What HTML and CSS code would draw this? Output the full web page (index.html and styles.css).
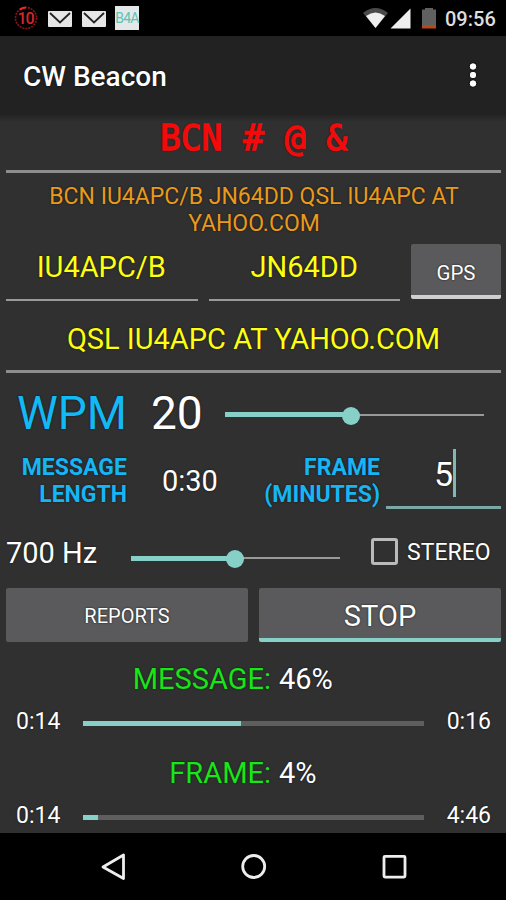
FILE: index.html
```html
<!DOCTYPE html>
<html lang="en">
<head>
<meta charset="utf-8">
<title>CW Beacon</title>
<link rel="stylesheet" href="styles.css">
</head>
<body>
<div class="phone">
  <header class="status">
    <svg class="status-icons" width="150" height="36" viewBox="0 0 150 36">
      <circle cx="26" cy="18" r="10.500" fill="none" stroke="#8c1418" stroke-width="1.600" stroke-dasharray="2 1"/>
      <path d="M20 9.500A10.500 10.500 0 0 1 26 7.500" fill="none" stroke="#e8282c" stroke-width="2.200"/>
      <text x="25.500" y="23.500" class="ten">10</text>
      <g id="mail">
        <rect x="48" y="11" width="24" height="16" rx="1" fill="#e6e6e6"/>
        <path d="M50 13L60 22.500L70 13" fill="none" stroke="#222" stroke-width="1.800"/>
      </g>
      <use href="#mail" x="34"/>
      <rect x="115" y="6" width="24" height="24" fill="#e4e8e8"/>
      <text x="127" y="23" class="b4a">B4A</text>
    </svg>
    <svg class="status-icons" width="76" height="36" viewBox="0 0 76 36">
      <path d="M0 13Q12.500 3 25 13L12.500 28Z" fill="#4a4a4a"/>
      <path d="M3 16Q12.500 9 22 16L12.500 28Z" fill="#efefef"/>
      <path d="M47.500 8.500V28.500H27.500Z" fill="#efefef"/>
      <path d="M59 9.500H62V8H70V9.500H73V25H59Z" fill="#606060"/>
      <rect x="59" y="25" width="14" height="3.500" fill="#b8471c"/>
    </svg>
    <span class="clock">09:56</span>
  </header>

  <div class="appbar">
    <h1 class="title">CW Beacon</h1>
    <svg width="12" height="30" viewBox="0 0 12 30">
      <g fill="#fff" stroke="#000" stroke-width="1"><circle cx="6" cy="6.500" r="3.800"/><circle cx="6" cy="15" r="3.800"/><circle cx="6" cy="23.500" r="3.800"/></g>
    </svg>
  </div>

  <main class="content">
    <div class="pattern"><span>BCN # @ &amp;</span></div>
    <p class="preview">BCN IU4APC/B JN64DD QSL IU4APC AT<br>YAHOO.COM</p>
    <div class="station">
      <div class="field call">IU4APC/B</div>
      <div class="field loc">JN64DD</div>
      <button class="btn gps">GPS</button>
    </div>
    <div class="message">QSL IU4APC AT YAHOO.COM</div>

    <div class="speed">
      <span class="wpm">WPM</span>
      <span class="wpm-value">20</span>
      <div class="slider wpm-slider"><i class="on"></i><i class="thumb"></i><i class="off"></i></div>
    </div>

    <div class="timing">
      <span class="label msg-label">MESSAGE<br>LENGTH</span>
      <span class="length">0:30</span>
      <span class="label frame-label">FRAME<br>(MINUTES)</span>
      <div class="minutes"><span class="digit">5</span><i class="caret"></i></div>
    </div>

    <div class="tone">
      <span class="hertz">700 Hz</span>
      <div class="slider tone-slider"><i class="on"></i><i class="thumb"></i><i class="off"></i></div>
      <i class="check"></i>
      <span class="stereo">STEREO</span>
    </div>

    <div class="actions">
      <button class="btn reports">REPORTS</button>
      <button class="btn stop">STOP</button>
    </div>

    <div class="heading h-message"><span class="green">MESSAGE:</span><span class="pct">46%</span></div>
    <div class="progress">
      <span class="time">0:14</span>
      <div class="track"><div class="fill" style="width:46.2%"></div></div>
      <span class="time">0:16</span>
    </div>
    <div class="heading h-frame"><span class="green">FRAME:</span><span class="pct">4%</span></div>
    <div class="progress">
      <span class="time">0:14</span>
      <div class="track"><div class="fill" style="width:4.4%"></div></div>
      <span class="time">4:46</span>
    </div>
  </main>

  <nav class="nav">
    <svg width="506" height="67" viewBox="0 0 506 67">
      <g fill="none" stroke="#eee" stroke-width="2.800" stroke-linejoin="round">
        <path d="M103 34L123.500 22V45.500Z"/>
        <circle cx="253.700" cy="33.500" r="11"/>
        <rect x="384" y="23.300" width="21" height="20.800" rx="1"/>
      </g>
    </svg>
  </nav>
</div>
</body>
</html>
```
FILE: styles.css
```css
* { box-sizing: border-box; margin: 0; padding: 0; }
body { background: #000; font-family: Roboto, sans-serif; color: #fff; }
.phone { width: 506px; height: 900px; display: flex; flex-direction: column; overflow: hidden; white-space: nowrap; }
svg { display: block; flex: none; }
i { display: block; flex: none; }

.status { height: 36px; display: flex; background: #000; }
.status-icons:nth-child(2) { margin-left: 213px; }
.ten { font: 500 16px Roboto, sans-serif; fill: #d8262a; text-anchor: middle; letter-spacing: -1px; }
.b4a { font: 14px Roboto, sans-serif; fill: #5cc4b4; text-anchor: middle; letter-spacing: -.8px; }
.clock { margin-left: 6px; line-height: 38px; font-size: 20px; font-weight: 500; color: #dedede; }

.appbar { height: 78px; display: flex; align-items: center; justify-content: space-between; padding: 0 27px 0 23px; background: #222; }
.title { font-size: 28px; font-weight: 500; line-height: 74px; padding-top: 4px; text-shadow: 0 0 2px #000; }

.content { height: 719px; background: linear-gradient(#222, #303030 8px); text-shadow: 0 0 2px #111; }
.pattern { height: 59px; margin: 0 5px 0 6px; border-bottom: 3px solid #8d8d8d; text-align: center; line-height: 48px; font-family: "DejaVu Sans Mono", monospace; font-size: 34.5px; color: #f30b0b; -webkit-text-stroke: 1.3px #f30b0b; }
.pattern span { display: inline-block; transform: scaleY(1.04); }
.preview { height: 71px; padding-top: 10px; text-align: center; line-height: 27px; font-size: 23px; color: #e99a1c; padding-left: 2px; }
.station { height: 57px; display: flex; gap: 11px; padding-left: 6px; }
.field { width: 191.5px; border-bottom: 2px solid #999; text-align: center; line-height: 47px; font-size: 29px; color: #ff1; }
.call { padding-right: 1px; }
.btn { border: 0; border-radius: 2px; background: #5a5a5c; font-family: inherit; color: #fff; text-align: center; text-shadow: inherit; }
.gps { width: 90px; height: 55px; border-bottom: 4px solid #d0d0d0; font-size: 20.5px; padding-top: 6px; }
.message { height: 72px; margin: 0 5px 0 6px; border-bottom: 3px solid #8d8d8d; text-align: center; line-height: 77px; font-size: 29px; color: #ff1; }

.speed { height: 76px; display: flex; line-height: 80px; font-size: 46px; }
.wpm { width: 133px; padding-left: 17px; color: #13b9f5; }
.wpm-value { width: 92px; padding-left: 18px; }
.slider { display: flex; align-items: center; }
.slider .on { height: 5px; background: #86d0c8; }
.slider .off { flex: 1; height: 2px; background: #999; }
.slider .thumb { width: 18px; height: 18px; margin: 2px -1px 0; border-radius: 50%; background: #86d0c8; z-index: 1; }
.wpm-slider { width: 259px; height: 83px; }
.wpm-slider .on { width: 118px; }

.timing { height: 60px; display: flex; }
.label { padding-top: 5px; text-align: right; line-height: 27px; font-size: 23px; font-weight: 700; color: #17b5f3; }
.msg-label { width: 127px; }
.length { width: 109px; padding-left: 35px; line-height: 65px; font-size: 29px; }
.frame-label { width: 144px; }
.minutes { width: 115px; height: 60px; margin-left: 6px; display: flex; border-bottom: 3px solid #7ba8a5; }
.digit { width: 67px; text-align: right; line-height: 51px; font-size: 34px; }
.caret { width: 3px; height: 48px; background: #7eb9b4; }

.tone { height: 78px; display: flex; align-items: center; padding-bottom: 1px; }
.hertz { width: 131px; padding-left: 6px; line-height: 60px; margin-top: 10px; font-size: 29px; }
.tone-slider { width: 209px; margin-top: 21px; }
.tone-slider .on { width: 96px; }
.check { width: 27px; height: 27px; margin: 8px 9px 0 31px; border: 3px solid #bababa; border-radius: 3px; }
.stereo { margin-top: 9px; font-size: 23px; }

.actions { display: flex; gap: 11px; padding: 1px 5px 0 6px; height: 56px; }
.actions .btn { width: 242px; height: 54px; }
.reports { font-size: 20px; padding-top: 2px; }
.stop { font-size: 29px; border-bottom: 4px solid #86d0c8; padding-top: 6px; }

.heading { display: flex; height: 54px; line-height: 72px; font-size: 29px; gap: 8px; }
.green { color: #19e619; text-align: right; width: 271px; }
.progress { display: flex; align-items: center; height: 46px; padding: 0 15px 0 16px; justify-content: space-between; }
.time { font-size: 23px; line-height: 46px; margin-top: 4px; }
.track { width: 341px; height: 5px; background: #5e5e5e; margin-top: 6px; }
.fill { height: 5px; background: #86d0c8; }
.h-frame { height: 48px; line-height: 61px; }

.nav { height: 67px; background: #000; }
```
